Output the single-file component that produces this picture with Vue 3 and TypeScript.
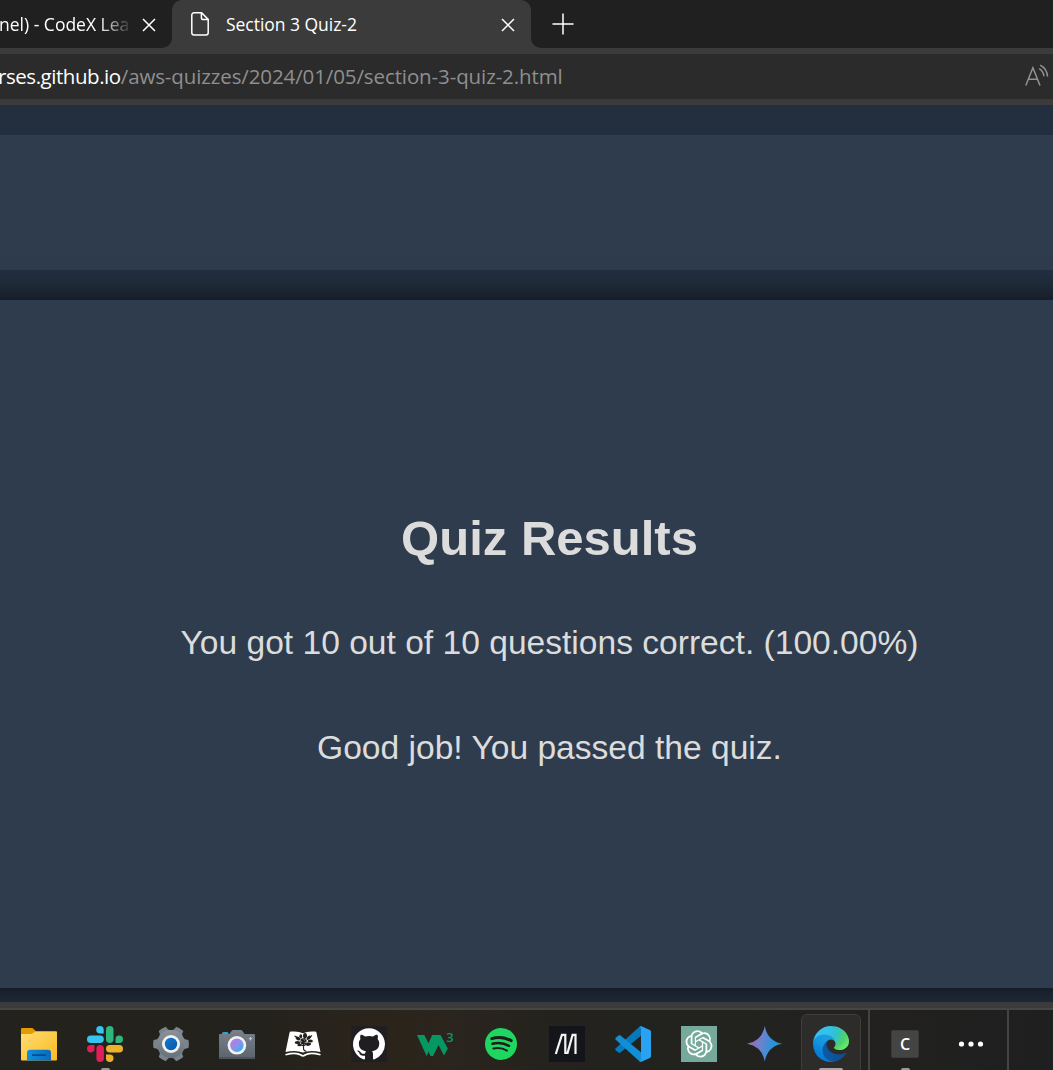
<script setup lang="ts">
const domain = 'rses.github.io'
const path = '/aws-quizzes/2024/01/05/section-3-quiz-2.html'
const total = 10
const correct = 10
const percent = ((correct / total) * 100).toFixed(2)
const gear = Array.from({ length: 6 }, (_, i) => i * 60)
</script>

<template>
  <div class="screen">
    <div class="tabstrip">
      <div class="tab tab-left">
        <span class="tab-title faded">nel) - CodeX Lea</span>
        <svg class="close" width="14" height="14" viewBox="0 0 14 14"><path d="M1 1l12 12M13 1L1 13" /></svg>
      </div>
      <div class="tab tab-active">
        <svg class="doc" width="20" height="26" viewBox="0 0 20 26">
          <path d="M4 1.8h7.600l6.600 6.600v13.400a2.200 2.200 0 0 1-2.200 2.200H4a2.200 2.200 0 0 1-2.200-2.200V4A2.200 2.200 0 0 1 4 1.800zM11.400 2v4.800a1.800 1.800 0 0 0 1.800 1.800H18" />
        </svg>
        <span class="tab-title section">Section 3 Quiz-2</span>
        <svg class="close" width="14" height="14" viewBox="0 0 14 14"><path d="M1 1l12 12M13 1L1 13" /></svg>
      </div>
      <div class="tab tab-new">
        <svg width="22" height="22" viewBox="0 0 22 22"><path d="M11 .5v21M.5 11h21" /></svg>
      </div>
    </div>
    <div class="addressbar">
      <span class="url"><span class="domain">{{ domain }}</span><span class="path">{{ path }}</span></span>
      <svg class="read" width="26" height="26" viewBox="0 0 26 26">
        <path d="M1.800 21.500L8.900 3.700l7.100 17.800M4.200 15.300h9.400M15.200 4.700a10 10 0 0 1 4.700 7.600M16.200 1.200a13.500 13.500 0 0 1 7.300 11.300" />
      </svg>
    </div>

    <main class="page">
      <div class="banner"></div>
      <section class="card">
        <h2>Quiz Results</h2>
        <p>You got {{ correct }} out of {{ total }} questions correct. ({{ percent }}%)</p>
        <p>Good job! You passed the quiz.</p>
      </section>
    </main>
    <div class="frame"></div>

    <footer class="taskbar">
      <div class="slot">
        <svg viewBox="0 0 36 36">
          <defs>
            <linearGradient id="fold" x1="0" y1="0" x2="1" y2="1"><stop offset="0" stop-color="#ffdd74" /><stop offset="1" stop-color="#fbba20" /></linearGradient>
            <linearGradient id="foldb" x1="0" y1="0" x2="1" y2="0"><stop offset="0" stop-color="#0f8fe0" /><stop offset="1" stop-color="#0869bd" /></linearGradient>
          </defs>
          <path fill="#e19c00" d="M1 2h10.500l3.500 3.300V11H0V3a1 1 0 0 1 1-1z" />
          <path fill="url(#fold)" d="M0 8h10.500l4.500-2.800h20a1 1 0 0 1 1 1V33.500a1 1 0 0 1-1 1H1a1 1 0 0 1-1-1z" />
          <path fill="url(#foldb)" d="M6 34.500V27a3.200 3.200 0 0 1 3.200-3.200h17.600A3.200 3.200 0 0 1 30 27v7.500z" />
          <rect x="11" y="28.300" width="14" height="1.800" rx=".9" fill="#064a88" />
        </svg>
      </div>
      <div class="slot">
        <svg viewBox="0 0 36 36">
          <g fill="#36c5f0"><path d="M13 0a3.700 3.700 0 1 0 0 7.500h3.700V3.700A3.700 3.700 0 0 0 13 0z" /><rect y="9.500" width="16.800" height="7.500" rx="3.750" /></g>
          <g fill="#2eb67d"><rect x="19" width="7.500" height="17" rx="3.750" /><path d="M36 13.250a3.750 3.750 0 1 0-7.500 0V17h3.750A3.750 3.750 0 0 0 36 13.250z" /></g>
          <g fill="#ecb22e"><rect x="19" y="19" width="17" height="7.500" rx="3.750" /><path d="M22.750 36a3.750 3.750 0 1 0 0-7.500H19v3.750A3.750 3.750 0 0 0 22.750 36z" /></g>
          <g fill="#e01e5a"><rect x="9.400" y="19" width="7.500" height="17" rx="3.750" /><path d="M0 22.750a3.750 3.750 0 1 0 7.500 0V19H3.750A3.750 3.750 0 0 0 0 22.750z" /></g>
        </svg>
        <i class="mark"></i>
      </div>
      <div class="slot">
        <svg viewBox="0 0 36 36">
          <defs>
            <linearGradient id="gear" x1="0" y1="0" x2="0" y2="1"><stop offset="0" stop-color="#8b919a" /><stop offset="1" stop-color="#68727c" /></linearGradient>
            <linearGradient id="gearb" x1="0" y1="0" x2="1" y2="1"><stop offset="0" stop-color="#1279d4" /><stop offset="1" stop-color="#0557a5" /></linearGradient>
          </defs>
          <g fill="#7b838c"><path v-for="a in gear" :key="a" d="M29 10.500l3 2.800 3.500.6q.8 4.100 0 8.200l-3.500.6-3 2.800z" :transform="`rotate(${a} 18 18)`" /></g>
          <circle cx="18" cy="18" r="14" fill="url(#gear)" />
          <circle cx="18" cy="18" r="9" fill="#f0f1f2" />
          <circle cx="18" cy="18" r="6.200" fill="url(#gearb)" />
        </svg>
      </div>
      <div class="slot">
        <svg viewBox="0 0 36 36">
          <defs>
            <linearGradient id="cam" x1="0" y1="0" x2="0" y2="1"><stop offset="0" stop-color="#79818a" /><stop offset="1" stop-color="#5b636c" /></linearGradient>
            <linearGradient id="lens" x1=".2" y1=".2" x2=".9" y2="1"><stop offset="0" stop-color="#b07fe4" /><stop offset=".5" stop-color="#7e96ea" /><stop offset="1" stop-color="#22b5ed" /></linearGradient>
          </defs>
          <rect x="3" y="6" width="6.500" height="5" rx="1.500" fill="#25a5e1" />
          <path fill="url(#cam)" d="M1 8h9.500l2-3q.7-1 2-1h7q1.300 0 2 1l2 3H35a1 1 0 0 1 1 1v23a1 1 0 0 1-1 1H1a1 1 0 0 1-1-1V9a1 1 0 0 1 1-1z" />
          <path fill="#4d545c" d="M0 31h36v1a1 1 0 0 1-1 1H1a1 1 0 0 1-1-1z" />
          <circle cx="17.900" cy="19.300" r="9.300" fill="#f1f2f4" /><circle cx="17.900" cy="19.300" r="6.700" fill="url(#lens)" />
          <path d="M31.500 11v3.400M29.800 12.700h3.400" stroke="#c9cdd2" stroke-width="1" />
        </svg>
      </div>
      <div class="slot">
        <svg viewBox="0 0 36 36">
          <path fill="#fff" d="M4.500 6.800Q4.800 5.700 6 5.600q7-.8 12 1.600 5-2.400 12-1.600 1.200.1 1.500 1.200L35.500 26Q25 23.500 18 26.600 11 23.500.5 26z" />
          <path fill="none" stroke="#fff" stroke-width="1.700" d="M.5 28.800q10.500-3 15.500.2 2 1.700 4 0 5-3.200 15.500-.2" />
          <g fill="#24211d"><ellipse cx="13" cy="12.500" rx="2.600" ry="1.700" transform="rotate(28 13 12.500)" /><ellipse cx="15.800" cy="10.200" rx="1.400" ry="2" /><ellipse cx="20" cy="9.800" rx="2" ry="2.900" /><ellipse cx="23.800" cy="11.600" rx="2.500" ry="1.600" transform="rotate(-35 23.800 11.600)" /><ellipse cx="25.300" cy="15" rx="2.600" ry="1.500" /><ellipse cx="23.500" cy="18.300" rx="2.600" ry="1.500" transform="rotate(-12 23.500 18.300)" /><ellipse cx="12.500" cy="16.500" rx="2.800" ry="1.500" /><ellipse cx="14.500" cy="19" rx="2.200" ry="1.200" /><circle cx="18.500" cy="15.200" r="3.200" /></g>
          <path fill="none" stroke="#24211d" stroke-width="1.100" d="M18.500 14v8.500q0 2.400 3 3M18.500 20l5-3.500M18.500 20l-6-3M9.500 10l4 2M27 9.500l-5 4" />
          <path fill="none" stroke="#e8e8e6" stroke-width=".6" d="M17.600 10.500l.6 3M21.500 11.500l-2 3M15 14.500l2 1.500M22.500 15.500l-3 1.200" />
        </svg>
      </div>
      <div class="slot">
        <svg viewBox="0 0 36 36">
          <rect width="36" height="36" fill="#211e22" />
          <path fill="#fff" transform="translate(2 2.200)scale(2)" d="M8 0C3.580 0 0 3.580 0 8c0 3.540 2.290 6.530 5.470 7.590.4.070.55-.17.55-.38 0-.19-.01-.82-.01-1.490-2.010.37-2.530-.49-2.690-.94-.09-.23-.48-.94-.82-1.130-.28-.15-.68-.52-.01-.53.63-.01 1.080.58 1.230.82.72 1.210 1.870.87 2.330.66.07-.52.28-.87.51-1.070-1.780-.2-3.640-.89-3.640-3.950 0-.87.31-1.590.82-2.150-.08-.2-.36-1.020.08-2.120 0 0 .67-.21 2.200.82.64-.18 1.320-.27 2-.27s1.360.09 2 .27c1.530-1.040 2.200-.82 2.200-.82.44 1.100.16 1.920.08 2.120.51.56.82 1.270.82 2.150 0 3.070-1.870 3.750-3.650 3.950.29.25.54.73.54 1.480 0 1.070-.01 1.930-.01 2.200 0 .21.15.46.55.38A8.010 8.010 0 0 0 16 8c0-4.420-3.580-8-8-8z" />
        </svg>
      </div>
      <div class="slot">
        <svg viewBox="0 0 36 36">
          <path fill="#059862" d="M0 9h7.300l4.200 8.300L15.200 9h8.300l7.300 13.500-3.800 7-5.500-10.500-5.400 11h-2.600l-2-4.200-1.800 4.200H9.600z" />
          <text x="29.200" y="15.500" fill="#059862" font-size="13" font-family="Open Sans, sans-serif" font-weight="600">3</text>
        </svg>
      </div>
      <div class="slot">
        <svg viewBox="0 0 36 36">
          <circle cx="18" cy="18" r="16" fill="#1ed760" />
          <g fill="none" stroke="#1d1d1a" stroke-linecap="round"><path stroke-width="3" d="M8.800 12.600q10-2.800 19.400 2" /><path stroke-width="2.500" d="M9.500 17.800q8.500-2.300 16.500 2" /><path stroke-width="2" d="M10.300 22.600q7.300-1.600 13.700 2" /></g>
        </svg>
      </div>
      <div class="slot">
        <svg viewBox="0 0 36 36">
          <rect width="36" height="36" fill="#14141b" />
          <path fill="none" stroke="#f4f4f5" stroke-width="2.200" d="M6.800 28L12.900 8.800h3.400V26.900h2.300L23.600 8.800h2.900V28" />
        </svg>
      </div>
      <div class="slot">
        <svg viewBox="0 0 36 36">
          <path fill="#0878bd" d="M26 .3v9.400L5.500 26.600q-1 .8-2 0L.7 24.200q-1-.9 0-1.900L24.400.8z" />
          <path fill="#118ed5" d="M26 35.700v-9.400L5.500 9.400q-1-.8-2 0L.7 11.800q-1 .9 0 1.900l23.700 21.500z" />
          <path fill="#29a3f1" d="M24 .9q1.200-1.200 3-.5l7.800 3.600Q36 4.500 36 5.800v24.400q0 1.300-1.200 1.800L27 35.600q-1.800.7-3-.5 2 .3 2-2V2.900q0-2.300-2-2z" />
        </svg>
      </div>
      <div class="slot">
        <svg viewBox="0 0 36 36">
          <rect width="36" height="36" fill="#75a99b" />
          <path fill="#fff" transform="translate(4.400 4.300)scale(1.130)" d="M22.2819 9.8211a5.9847 5.9847 0 0 0-.5157-4.9108 6.0462 6.0462 0 0 0-6.5098-2.9A6.0651 6.0651 0 0 0 4.9807 4.1818a5.9847 5.9847 0 0 0-3.9977 2.9 6.0462 6.0462 0 0 0 .7427 7.0966 5.98 5.98 0 0 0 .511 4.9107 6.051 6.051 0 0 0 6.5146 2.9001A5.9847 5.9847 0 0 0 13.2599 24a6.0557 6.0557 0 0 0 5.7718-4.2058 5.9894 5.9894 0 0 0 3.9977-2.9001 6.0557 6.0557 0 0 0-.7475-7.0729zm-9.022 12.6081a4.4755 4.4755 0 0 1-2.8764-1.0408l.1419-.0804 4.7783-2.7582a.7948.7948 0 0 0 .3927-.6813v-6.7369l2.02 1.1686a.071.071 0 0 1 .038.052v5.5826a4.504 4.504 0 0 1-4.4945 4.4944zm-9.6607-4.1254a4.4708 4.4708 0 0 1-.5346-3.0137l.142.0852 4.783 2.7582a.7712.7712 0 0 0 .7806 0l5.8428-3.3685v2.3324a.0804.0804 0 0 1-.0332.0615L9.74 19.9502a4.4992 4.4992 0 0 1-6.1408-1.6464zM2.3408 7.8956a4.485 4.485 0 0 1 2.3655-1.9728V11.6a.7664.7664 0 0 0 .3879.6765l5.8144 3.3543-2.0201 1.1685a.0757.0757 0 0 1-.071 0l-4.8303-2.7865A4.504 4.504 0 0 1 2.3408 7.872zm16.5963 3.8558L13.1038 8.364 15.1192 7.2a.0757.0757 0 0 1 .071 0l4.8303 2.7913a4.4944 4.4944 0 0 1-.6765 8.1042v-5.6772a.79.79 0 0 0-.407-.667zm2.0107-3.0231l-.142-.0852-4.7735-2.7818a.7759.7759 0 0 0-.7854 0L9.409 9.2297V6.8974a.0662.0662 0 0 1 .0284-.0615l4.8303-2.7866a4.4992 4.4992 0 0 1 6.6802 4.66zM8.3065 12.863l-2.02-1.1638a.0804.0804 0 0 1-.038-.0567V6.0742a4.4992 4.4992 0 0 1 7.3757-3.4537l-.142.0805L8.704 5.459a.7948.7948 0 0 0-.3927.6813zm1.0976-2.3654l2.602-1.4998 2.6069 1.4998v2.9994l-2.5974 1.4997-2.6067-1.4997Z" />
        </svg>
      </div>
      <div class="slot">
        <svg viewBox="0 0 36 36">
          <defs><linearGradient id="gem" x1="0" y1=".4" x2="1" y2=".6"><stop offset=".05" stop-color="#a368a8" /><stop offset=".4" stop-color="#6b83cf" /><stop offset=".7" stop-color="#2c93d8" /><stop offset="1" stop-color="#2d88c4" /></linearGradient></defs>
          <path fill="url(#gem)" d="M17.800 0Q20.500 15 35.500 17.800 20.500 20.500 17.800 35.500 15 20.500 0 17.800 15 15 17.800 0z" />
        </svg>
      </div>
      <div class="slot active">
        <svg viewBox="0 0 256 256">
          <defs>
            <linearGradient id="e1" x1=".2" y1=".5" x2="1" y2=".5"><stop offset="0" stop-color="#0c59a4" /><stop offset="1" stop-color="#114a8b" /></linearGradient>
            <linearGradient id="e2" x1=".7" y1=".2" x2=".2" y2="1"><stop offset="0" stop-color="#1b9de2" /><stop offset=".35" stop-color="#1595df" /><stop offset=".7" stop-color="#0680d7" /><stop offset="1" stop-color="#0078d4" /></linearGradient>
            <radialGradient id="e3" cx=".1" cy=".25" r="1"><stop offset="0" stop-color="#35c1f1" /><stop offset=".3" stop-color="#34c1ed" /><stop offset=".55" stop-color="#2fc2cf" /><stop offset=".82" stop-color="#4fd268" /><stop offset="1" stop-color="#66eb6e" /></radialGradient>
          </defs>
          <g transform="translate(-4.630 -4.920)">
            <path fill="url(#e1)" d="M235.680 195.460a93.730 93.730 0 0 1-10.540 4.710 101.870 101.870 0 0 1-35.900 6.460c-47.320 0-88.540-32.550-88.540-74.320A31.480 31.480 0 0 1 117.130 105c-42.800 1.800-53.800 46.400-53.800 72.530 0 73.880 68.090 81.370 82.760 81.370 7.910 0 19.840-2.300 27-4.560l1.310-.44a128.340 128.340 0 0 0 66.600-52.800 4 4 0 0 0-5.320-5.640z" />
            <path fill="url(#e2)" d="M110.340 246.340A79.200 79.200 0 0 1 87.600 225a80.720 80.720 0 0 1 29.530-120c3.120-1.470 8.450-4.130 15.540-4a32.350 32.350 0 0 1 25.690 13 31.880 31.880 0 0 1 6.360 18.660c0-.21 24.460-79.600-80-79.600-43.900 0-80 41.660-80 78.210a130.150 130.150 0 0 0 12.110 56 128 128 0 0 0 156.380 67.110 75.550 75.550 0 0 1-62.780-8z" />
            <path fill="url(#e3)" d="M156.940 153.780c-.81 1.050-3.300 2.500-3.300 5.660 0 2.610 1.700 5.120 4.720 7.230 14.380 10 41.490 8.680 41.560 8.680a59.560 59.560 0 0 0 30.270-8.350 61.380 61.380 0 0 0 30.430-52.880c.26-22.410-8-37.310-11.340-43.910C228.090 28.760 182.350 4.920 132.610 4.920a128 128 0 0 0-128 126.200c.48-36.540 36.800-66.050 80-66.050 3.500 0 23.460.34 42 10.070 16.340 8.580 24.900 18.940 30.850 29.210 6.180 10.670 7.280 24.150 7.280 29.520s-2.740 13.330-7.800 19.910z" />
          </g>
        </svg>
        <i class="mark wide"></i>
      </div>
      <i class="divider first"></i>
      <div class="slot"><span class="keycap">C</span><i class="mark"></i></div>
      <div class="slot">
        <svg viewBox="0 0 36 36" fill="#fff"><circle cx="8.500" cy="18" r="2.600" /><circle cx="18" cy="18" r="2.600" /><circle cx="27.500" cy="18" r="2.600" /></svg>
      </div>
      <i class="divider second"></i>
    </footer>
  </div>
</template>

<style>
body { margin: 0; background: #232f3f; }
</style>

<style scoped>
.screen { width: 1053px; height: 1070px; overflow: hidden; display: flex; flex-direction: column; background: #3b3b3b; }
.tabstrip { height: 48px; flex: none; display: flex; font-family: "Open Sans", "Noto Sans", sans-serif; }
.tab { box-sizing: border-box; height: 48px; display: flex; align-items: center; color: #fff; }
.tab svg { flex: none; fill: none; stroke: #fff; stroke-width: 1.5; }
.tab-title { white-space: pre; font-size: 17.500px; line-height: 47px; }
.tab-left { width: 171.500px; background: #202020; border-bottom-right-radius: 10px; }
.faded { width: 131px; margin-left: -1px; margin-right: 12px; overflow: hidden; -webkit-mask-image: linear-gradient(90deg, #000 100px, transparent 134px); mask-image: linear-gradient(90deg, #000 100px, transparent 134px); }
.tab-active { width: 359.500px; padding-left: 18.500px; background: #3b3b3b; position: relative; }
.tab-active::before { content: ""; position: absolute; inset: 0 0 10px 0; z-index: 0; box-shadow: 0 0 0 10px #202020; border-radius: 10px 10px 0 0; clip-path: inset(0); }
.tab-active > * { position: relative; }
.section { width: 265px; margin-left: 16px; letter-spacing: -0.030px; }
.tab-active .close { margin-left: 9.500px; }
.close { position: relative; top: 1px; }
.tab-new { flex: 1; padding-left: 21px; padding-bottom: 1px; background: #202020; border-bottom-left-radius: 10px; }
.addressbar { height: 45px; margin: 6px 0; flex: none; display: flex; align-items: center; justify-content: space-between; background: #2b2b2b; font: 20.500px/45px "Open Sans", "Noto Sans", sans-serif; }
.url { white-space: pre; }
.domain { color: #fff; margin-left: -2px; letter-spacing: -0.450px; }
.path { color: #8f8f8f; letter-spacing: -0.110px; }
.read { margin-right: 3px; fill: none; stroke: #929292; stroke-width: 1.5; }
.page { height: 897px; flex: none; box-sizing: border-box; padding-top: 30px; overflow: hidden; background: #232f3f; }
.banner { height: 135px; background: #2f3c4d; }
.card { height: 688px; margin: 30px -60px 0; box-sizing: border-box; padding: 210px 60px 0 106px; text-align: center; background: #2f3c4d; box-shadow: 0 0 30px rgba(0, 0, 0, 0.75); color: #dcdcdc; font-family: "Liberation Sans", Arial, sans-serif; }
.card h2 { margin: 0 0 57px; font-size: 49px; line-height: 56px; }
.card p { margin: 0 0 66px; font-size: 33.600px; line-height: 39px; white-space: nowrap; }
.frame { height: 8px; flex: none; box-sizing: border-box; background: #3b3b3b; border-bottom: 2px solid #464643; }
.taskbar { height: 60px; flex: none; display: flex; box-sizing: border-box; padding-left: 6px; background: linear-gradient(90deg, #23221e 0, #24221d 250px, #2b241b 390px, #2a251d 450px, #23221e 580px, #22221f 750px, #201f1f 1053px); }
.slot { position: relative; width: 66px; height: 60px; flex: none; display: flex; justify-content: center; padding-top: 16px; box-sizing: border-box; }
.slot svg { width: 36px; height: 36px; overflow: visible; }
.active::before { content: ""; position: absolute; top: 4px; left: 3px; width: 60px; height: 60px; box-sizing: border-box; border: 1px solid #403e3c; border-radius: 6px; background: #2e2c2b; }
.active svg { position: relative; }
.mark { position: absolute; left: 50%; bottom: 0; width: 9px; height: 2px; margin-left: -4px; border-radius: 2px 2px 0 0; background: #9b9a98; }
.mark.wide { width: 24px; margin-left: -12px; background: #aaa8a7; }
.divider { width: 2px; height: 60px; flex: none; background: #454443; }
.first { margin: 0 2px 0 4px; }
.second { height: 62px; margin: -2px 0 0 3px; }
.keycap { width: 28px; height: 28px; margin-top: 4px; box-sizing: border-box; border: 1px solid #3a3a3a; border-radius: 2px; background: #444; color: #fff; font: 600 16px/27px "Open Sans", sans-serif; text-align: center; }
</style>
